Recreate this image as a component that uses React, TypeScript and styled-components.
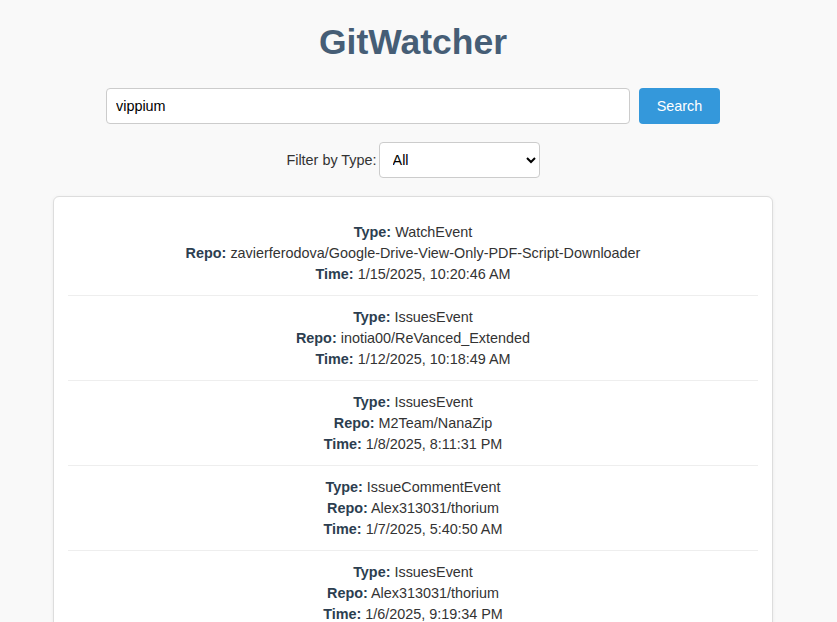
import React, { useState } from "react";
import styled, { createGlobalStyle } from "styled-components";

const GlobalStyle = createGlobalStyle`
  html, body { margin: 0; padding: 0; background: #f9f9f9; }
  body { font-family: "Liberation Sans", Arial, sans-serif; color: #333; }
  * { box-sizing: border-box; }
`;

const Page = styled.div`
  padding: 0 11px 0 0;
  display: flex;
  flex-direction: column;
  align-items: center;
`;

const Title = styled.h1`
  margin: 20px 0 24px;
  font-size: 35.5px;
  line-height: 44px;
  font-weight: 700;
  color: #465e76;
`;

const SearchRow = styled.form`
  display: flex;
  gap: 9px;
  width: 614px;
`;

const SearchInput = styled.input`
  flex: 1;
  height: 36px;
  padding: 0 9px;
  border: 1px solid #ccc;
  border-radius: 4px;
  font-family: "Liberation Sans", Arial, sans-serif;
  font-size: 14.4px;
  color: #000;
  background: #fff;
  outline: none;
`;

const SearchButton = styled.button`
  width: 81px;
  height: 36px;
  border: none;
  border-radius: 4px;
  background: #3498db;
  color: #fff;
  font-family: "Liberation Sans", Arial, sans-serif;
  font-size: 14.4px;
  cursor: pointer;
`;

const FilterRow = styled.div`
  margin-top: 18px;
  display: flex;
  align-items: center;
  gap: 2px;
`;

const FilterLabel = styled.label`
  font-size: 14.4px;
  color: #333;
`;

const Select = styled.select`
  width: 161px;
  height: 36px;
  padding: 0 9px;
  border: 1px solid #ccc;
  border-radius: 4px;
  background: #fff;
  font-family: "Liberation Sans", Arial, sans-serif;
  font-size: 14.4px;
  color: #000;
`;

const Card = styled.div`
  margin-top: 18px;
  width: 720px;
  background: #fff;
  border: 1px solid #ddd;
  border-radius: 6px;
  box-shadow: 0 1px 4px rgba(0, 0, 0, 0.06);
  padding: 14px 14px;
`;

const Item = styled.div`
  padding: 11px 0 10px;
  border-bottom: 1px solid #eee;
  text-align: center;
  font-size: 14.4px;
  line-height: 21px;
  color: #333;
`;

const Line = styled.div``;

const Label = styled.strong`
  color: #2c3e50;
  font-weight: 700;
`;

type Event = { type: string; repo: string; time: string };

const events: Event[] = [
  { type: "WatchEvent", repo: "zavierferodova/Google-Drive-View-Only-PDF-Script-Downloader", time: "1/15/2025, 10:20:46 AM" },
  { type: "IssuesEvent", repo: "inotia00/ReVanced_Extended", time: "1/12/2025, 10:18:49 AM" },
  { type: "IssuesEvent", repo: "M2Team/NanaZip", time: "1/8/2025, 8:11:31 PM" },
  { type: "IssueCommentEvent", repo: "Alex313031/thorium", time: "1/7/2025, 5:40:50 AM" },
  { type: "IssuesEvent", repo: "Alex313031/thorium", time: "1/6/2025, 9:19:34 PM" },
];

export default function App() {
  const [query, setQuery] = useState("vippium");
  const [filter, setFilter] = useState("All");
  return (
    <>
      <GlobalStyle />
      <Page>
        <Title>GitWatcher</Title>
        <SearchRow onSubmit={(e) => e.preventDefault()}>
          <SearchInput value={query} onChange={(e) => setQuery(e.target.value)} />
          <SearchButton type="submit">Search</SearchButton>
        </SearchRow>
        <FilterRow>
          <FilterLabel htmlFor="type">Filter by Type:</FilterLabel>
          <Select id="type" value={filter} onChange={(e) => setFilter(e.target.value)}>
            <option>All</option>
            <option>WatchEvent</option>
            <option>IssuesEvent</option>
            <option>IssueCommentEvent</option>
            <option>PushEvent</option>
          </Select>
        </FilterRow>
        <Card>
          {events.map((ev, i) => (
            <Item key={i}>
              <Line><Label>Type:</Label> {ev.type}</Line>
              <Line><Label>Repo:</Label> {ev.repo}</Line>
              <Line><Label>Time:</Label> {ev.time}</Line>
            </Item>
          ))}
        </Card>
      </Page>
    </>
  );
}
